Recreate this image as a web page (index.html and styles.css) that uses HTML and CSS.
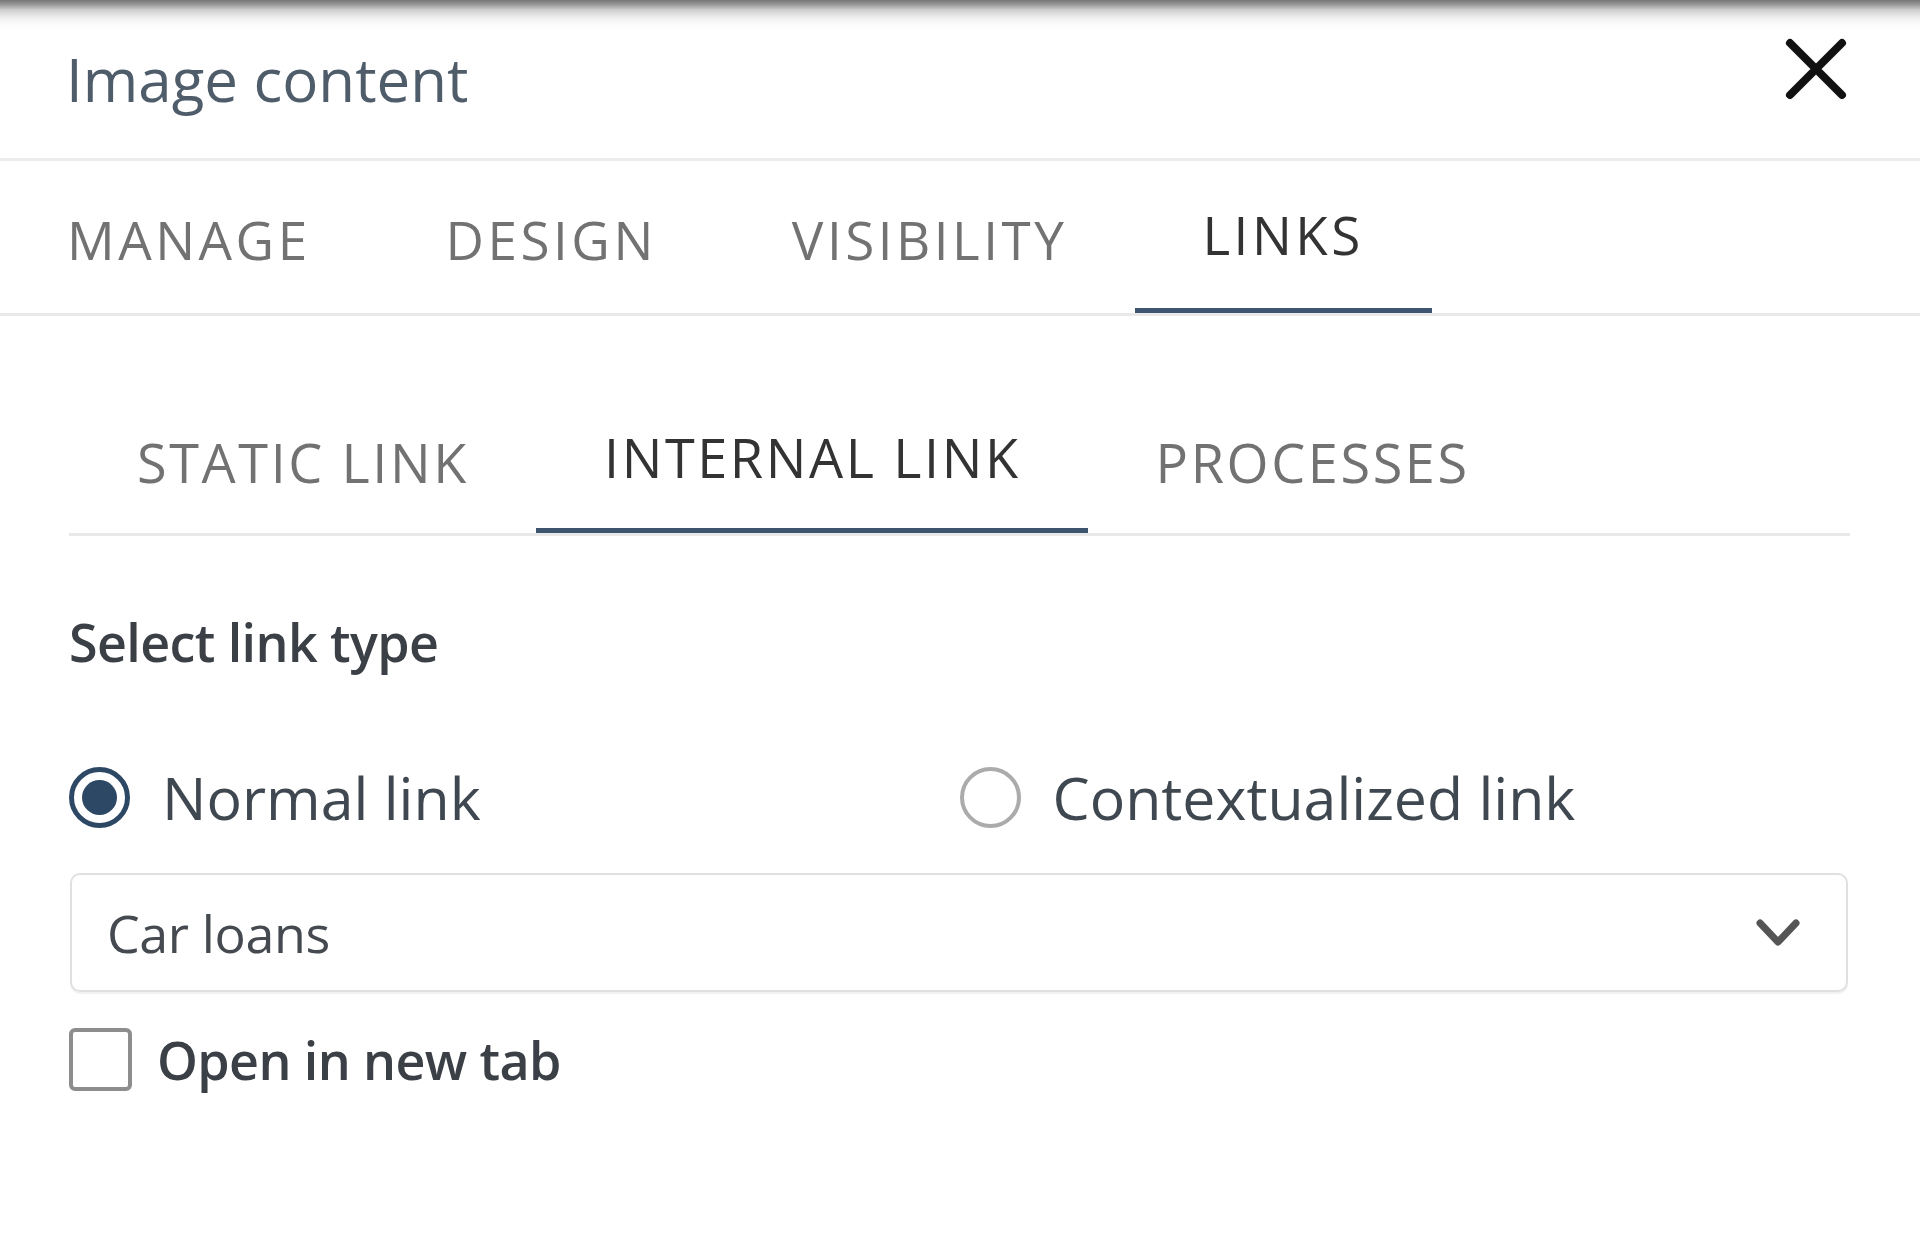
FILE: index.html
```html
<!DOCTYPE html>
<html lang="en">
<head>
<meta charset="utf-8">
<title>Image content</title>
<link rel="stylesheet" href="styles.css">
</head>
<body>
<div class="panel">
  <header class="header">
    <h1 class="title">Image content</h1>
    <button class="close" type="button" aria-label="Close">
      <svg width="64" height="64" viewBox="0 0 64 64"><path d="M6 6 L58 58 M58 6 L6 58" fill="none" stroke="#111" stroke-width="8" stroke-linecap="round"/></svg>
    </button>
  </header>
  <nav class="tabs">
    <div class="tab">MANAGE</div>
    <div class="tab">DESIGN</div>
    <div class="tab">VISIBILITY</div>
    <div class="tab active">LINKS</div>
  </nav>
  <main class="content">
    <div class="subtabs">
      <div class="subtab">STATIC LINK</div>
      <div class="subtab active">INTERNAL LINK</div>
      <div class="subtab">PROCESSES</div>
    </div>
    <div class="label">Select link type</div>
    <div class="radios">
      <label class="radio-item"><span class="radio checked"></span><span class="radio-text">Normal link</span></label>
      <label class="radio-item"><span class="radio"></span><span class="radio-text">Contextualized link</span></label>
    </div>
    <div class="select">
      <span class="select-value">Car loans</span>
      <svg class="chevron" width="44" height="28" viewBox="0 0 44 28"><path d="M4 4 L22 23 L40 4" fill="none" stroke="#555" stroke-width="7" stroke-linecap="round" stroke-linejoin="round"/></svg>
    </div>
    <label class="check"><span class="box"></span><span class="check-text">Open in new tab</span></label>
  </main>
</div>
</body>
</html>
```

FILE: styles.css
```css
* { box-sizing: border-box; }
html, body { margin: 0; padding: 0; background: #fff; }
body { font-family: "Open Sans", "Noto Sans", sans-serif; color: #3b4046; }

.panel { width: 1920px; min-height: 1254px; background: #fff; }

.header {
  height: 161px;
  display: flex;
  justify-content: space-between;
  align-items: flex-start;
  border-bottom: 3px solid #ececec;
  background: linear-gradient(to bottom, #767676 0px, #9c9c9c 5px, #cfcfcf 10px, #efefef 18px, #fbfbfb 24px, #ffffff 30px);
}
.title {
  margin: 49px 0 0 66px;
  font-size: 60px;
  line-height: 1;
  font-weight: 400;
  color: #4f5d6b;
}
.close {
  margin: 37px 72px 0 0;
  padding: 0;
  border: 0;
  background: transparent;
  width: 64px;
  height: 64px;
  display: block;
}
.close svg { display: block; }

.tabs {
  display: flex;
  border-bottom: 3px solid #e9e9e9;
}
.tab {
  padding: 52px 68px 47px 67px;
  font-size: 53px;
  line-height: 1;
  letter-spacing: 3.5px;
  color: #727272;
}
.tab.active {
  padding-top: 47px;
  padding-bottom: 52px;
  color: #333;
  box-shadow: inset 0 -5px 0 #3e5570;
}

.content { padding: 0 70px 0 69px; }

.subtabs {
  margin-top: 70px;
  display: flex;
  border-bottom: 3px solid #e9e9e9;
}
.subtab {
  padding: 49px 67px 44px 68px;
  font-size: 54px;
  line-height: 1;
  letter-spacing: 2.6px;
  color: #727272;
}
.subtab.active {
  padding-top: 44px;
  padding-bottom: 49px;
  color: #333;
  box-shadow: inset 0 -5px 0 #3e5570;
}

.label {
  margin-top: 80px;
  font-size: 52px;
  line-height: 1;
  font-weight: 600;
  letter-spacing: -0.6px;
  color: #3b4046;
}

.radios {
  margin-top: 99px;
  display: grid;
  grid-template-columns: 1fr 1fr;
}
.radio-item {
  display: flex;
  align-items: center;
  gap: 32px;
}
.radio {
  width: 61px;
  height: 61px;
  border-radius: 50%;
  border: 4px solid #ababab;
  flex: none;
}
.radio.checked {
  border: 5px solid #2d4864;
  padding: 8px;
  background: #2d4864;
  background-clip: content-box;
}
.radio-text {
  font-size: 59px;
  line-height: 1;
  color: #3f4850;
}

.select {
  margin: 45px 2px 0 1px;
  height: 119px;
  border: 2px solid #e0e0e0;
  border-radius: 10px;
  box-shadow: 0 2px 1px rgba(0,0,0,0.06);
  display: flex;
  align-items: center;
  justify-content: space-between;
  padding: 0 46px 0 35px;
}
.select-value {
  font-size: 52px;
  line-height: 1;
  letter-spacing: -0.4px;
  color: #454a50;
}
.chevron { display: block; }

.check {
  margin-top: 36px;
  display: flex;
  align-items: center;
  gap: 25px;
}
.box {
  width: 63px;
  height: 63px;
  border: 4px solid #8d8d8d;
  border-radius: 6px;
  flex: none;
}
.check-text {
  font-size: 52px;
  line-height: 1;
  font-weight: 600;
  letter-spacing: -0.6px;
  color: #3b4046;
}
```
